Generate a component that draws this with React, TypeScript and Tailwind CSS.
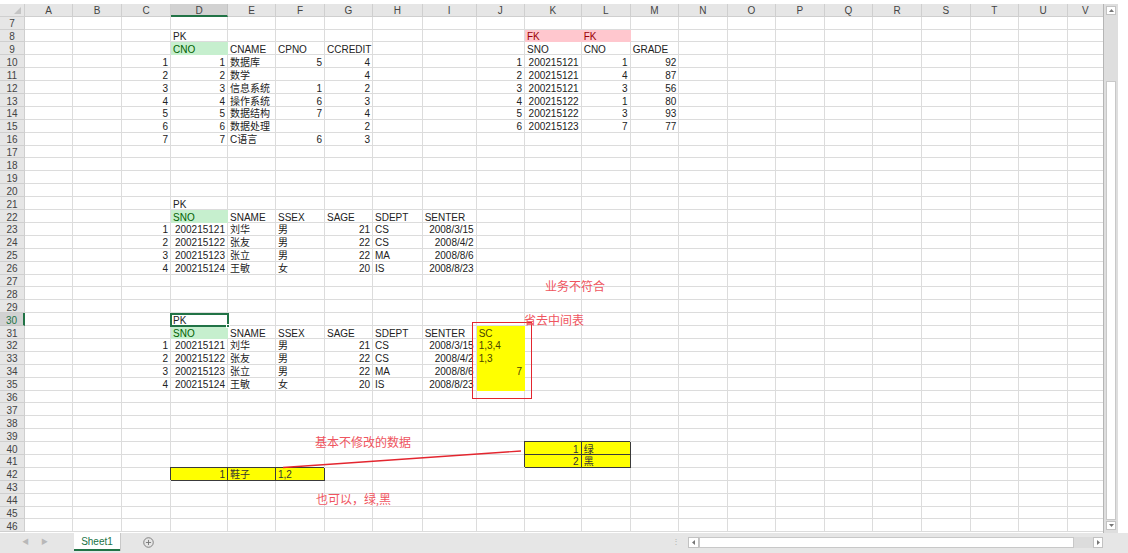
import React from "react";

type Cell = { v: string; r?: boolean; s?: "green" | "pink" | "yellow" | "box" };

const COLS = ["A", "B", "C", "D", "E", "F", "G", "H", "I", "J", "K", "L", "M", "N", "O", "P", "Q", "R", "S", "T", "U", "V"];
const ROWS = Array.from({ length: 40 }, (_, i) => i + 7);

const courses: [string, string, string, string][] = [
  ["1", "数据库", "5", "4"],
  ["2", "数学", "", "4"],
  ["3", "信息系统", "1", "2"],
  ["4", "操作系统", "6", "3"],
  ["5", "数据结构", "7", "4"],
  ["6", "数据处理", "", "2"],
  ["7", "C语言", "6", "3"],
];

const grades: [string, string, string][] = [
  ["200215121", "1", "92"],
  ["200215121", "4", "87"],
  ["200215121", "3", "56"],
  ["200215122", "1", "80"],
  ["200215122", "3", "93"],
  ["200215123", "7", "77"],
];

const students: [string, string, string, string, string, string][] = [
  ["200215121", "刘华", "男", "21", "CS", "2008/3/15"],
  ["200215122", "张友", "男", "22", "CS", "2008/4/2"],
  ["200215123", "张立", "男", "22", "MA", "2008/8/6"],
  ["200215124", "王敏", "女", "20", "IS", "2008/8/23"],
];

function buildCells() {
  const c: Record<string, Cell> = {
    D8: { v: "PK" },
    K8: { v: "FK", s: "pink" },
    L8: { v: "FK", s: "pink" },
    D9: { v: "CNO", s: "green" },
    E9: { v: "CNAME" },
    F9: { v: "CPNO" },
    G9: { v: "CCREDIT" },
    K9: { v: "SNO" },
    L9: { v: "CNO" },
    M9: { v: "GRADE" },
    J31: { v: "SC", s: "yellow" },
    J32: { v: "1,3,4", s: "yellow" },
    J33: { v: "1,3", s: "yellow" },
    J34: { v: "7", r: true, s: "yellow" },
    J35: { v: "", s: "yellow" },
    K40: { v: "1", r: true, s: "box" },
    L40: { v: "绿", s: "box" },
    K41: { v: "2", r: true, s: "box" },
    L41: { v: "黑", s: "box" },
    D42: { v: "1", r: true, s: "box" },
    E42: { v: "鞋子", s: "box" },
    F42: { v: "1,2", s: "box" },
  };
  courses.forEach(([n, name, cp, cr], i) => {
    const r = 10 + i;
    c["C" + r] = { v: n, r: true };
    c["D" + r] = { v: n, r: true };
    c["E" + r] = { v: name };
    c["F" + r] = { v: cp, r: true };
    c["G" + r] = { v: cr, r: true };
  });
  grades.forEach(([sno, cno, g], i) => {
    const r = 10 + i;
    c["J" + r] = { v: String(i + 1), r: true };
    c["K" + r] = { v: sno, r: true };
    c["L" + r] = { v: cno, r: true };
    c["M" + r] = { v: g, r: true };
  });
  [22, 31].forEach((h) => {
    c["D" + (h - 1)] = { v: "PK" };
    c["D" + h] = { v: "SNO", s: "green" };
    c["E" + h] = { v: "SNAME" };
    c["F" + h] = { v: "SSEX" };
    c["G" + h] = { v: "SAGE" };
    c["H" + h] = { v: "SDEPT" };
    c["I" + h] = { v: "SENTER" };
    students.forEach(([sno, name, sex, age, dept, date], i) => {
      const r = h + 1 + i;
      c["C" + r] = { v: String(i + 1), r: true };
      c["D" + r] = { v: sno, r: true };
      c["E" + r] = { v: name };
      c["F" + r] = { v: sex };
      c["G" + r] = { v: age, r: true };
      c["H" + r] = { v: dept };
      c["I" + r] = { v: date, r: true };
    });
  });
  return c;
}

const cells = buildCells();

function styleFor(s?: Cell["s"]) {
  if (s === "green") return "bg-[#c6efce] text-[#006100] border-[#c6efce]";
  if (s === "pink") return "bg-[#ffc7ce] text-[#9c0006] border-[#ffc7ce]";
  if (s === "yellow") return "bg-[#ffff00] text-[#4a4400] border-[#ffff00]";
  if (s === "box") return "bg-[#ffff00] text-[#333] border-[#3a3a3a] shadow-[-1px_-1px_0_0_#3a3a3a]";
  return "text-[#222] border-[#dcdcdc]";
}

function Grid() {
  return (
    <div className="grid grid-cols-[25px_48px_49px_49px_57px_48px_49px_48px_49.7px_54px_48.3px_56.7px_49px_48.6px_48.4px_48.6px_48.4px_48.6px_49px_48.4px_48.6px_48.7px_36px] grid-rows-[12.7px_repeat(40,12.9px)] text-[10px] leading-[10px]">
      {/* header row */}
      <div className="bg-[#e6e6e6] border-r border-b border-[#cfcfcf] flex items-end justify-end pr-[3px] pb-[2px]">
        <svg width="7" height="7" viewBox="0 0 7 7">
          <path d="M7 0V7H0Z" fill="#c4c4c4" />
        </svg>
      </div>
      {COLS.map((col) =>
        col === "D" ? (
          <div key={col} className="bg-[#d2d2d2] border-r border-[#c4c4c4] border-b-2 border-b-[#217346] flex items-start pt-[2px] justify-center text-[#444]">
            {col}
          </div>
        ) : (
          <div key={col} className="bg-[#e6e6e6] border-r border-b border-[#cfcfcf] flex items-start pt-[2px] justify-center text-[#444]">
            {col}
          </div>
        )
      )}
      {ROWS.map((r) => (
        <React.Fragment key={r}>
          {r === 30 ? (
            <div className="bg-[#d2d2d2] border-b border-[#c4c4c4] border-r-2 border-r-[#217346] flex items-start pt-[2.5px] justify-center text-[#217346]">
              {r}
            </div>
          ) : (
            <div className="bg-[#e6e6e6] border-r border-b border-[#cfcfcf] flex items-start pt-[2.5px] justify-center text-[#444]">
              {r}
            </div>
          )}
          {COLS.map((col) => {
            const c = cells[col + r];
            return (
              <div
                key={col}
                className={`border-r border-b flex items-start pt-[2.5px] whitespace-nowrap overflow-visible px-[2px] ${styleFor(c?.s)} ${c?.r ? "justify-end" : "justify-start"}`}
              >
                {c?.v}
              </div>
            );
          })}
        </React.Fragment>
      ))}
    </div>
  );
}

export default function App() {
  return (
    <div className="relative w-[1128px] h-[553px] bg-white overflow-hidden font-['Liberation_Sans','Noto_Sans_CJK_SC',sans-serif]">
      <div className="h-[4px]" />
      <div className="flex h-[529px]">
        <div className="w-[1104px] h-[529px] overflow-hidden border-r border-[#b5b5b5]">
          <Grid />
        </div>
        {/* vertical scrollbar */}
        <div className="w-[14px] bg-[#dedede] flex flex-col items-center pt-[2px] pb-[3px] gap-[1px]">
          <div className="w-[10px] h-[9px] bg-white border border-[#c2c2c2] flex items-center justify-center">
            <svg width="5" height="3" viewBox="0 0 5 3">
              <path d="M2.5 0L5 3H0Z" fill="#777" />
            </svg>
          </div>
          <div className="h-[64px]" />
          <div className="w-[10px] flex-1 bg-white border border-[#c8c8c8]" />
          <div className="w-[10px] h-[9px] bg-white border border-[#c2c2c2] flex items-center justify-center">
            <svg width="5" height="3" viewBox="0 0 5 3">
              <path d="M0 0H5L2.5 3Z" fill="#777" />
            </svg>
          </div>
        </div>
        <div className="w-[10px]" />
      </div>

      {/* sheet tabs bar */}
      <div className="h-[20px] bg-[#e6e6e6] flex items-start text-[10px]">
        <div className="w-[74px] h-[18px] flex items-center gap-[12px] pl-[22px] text-[#b8b8b8]">
          <span className="text-[7px]">◀</span>
          <span className="text-[7px]">▶</span>
        </div>
        <div className="w-[46px] h-[18px] bg-white border-b-2 border-[#217346] flex items-center justify-center text-[#217346] shadow-[1px_0_0_#c8c8c8]">
          Sheet1
        </div>
        <div className="w-[56px] h-[18px] flex items-center justify-center">
          <svg width="11" height="11" viewBox="0 0 12 12">
            <circle cx="6" cy="6" r="5.2" fill="none" stroke="#777" strokeWidth="1" />
            <path d="M6 3.2v5.6M3.2 6h5.6" stroke="#777" strokeWidth="1" />
          </svg>
        </div>
        <div className="flex-1 flex items-center h-[18px] pl-[496px]">
          <span className="text-[#b0b0b0] text-[8px] leading-[8px]">⋮</span>
          <div className="ml-[8px] w-[415px] h-[11px] bg-[#dcdcdc] flex">
            <div className="w-[11px] h-[11px] bg-white border border-[#c2c2c2] flex items-center justify-center">
              <svg width="3" height="5" viewBox="0 0 3 5">
                <path d="M3 0V5L0 2.5Z" fill="#777" />
              </svg>
            </div>
            <div className="w-[375px] h-[11px] bg-white border border-[#c8c8c8]" />
            <div className="flex-1" />
            <div className="w-[10px] h-[11px] bg-white border border-[#c2c2c2] flex items-center justify-center">
              <svg width="3" height="5" viewBox="0 0 3 5">
                <path d="M0 0V5L3 2.5Z" fill="#777" />
              </svg>
            </div>
          </div>
        </div>
      </div>

      {/* active cell D30 */}
      <div className="absolute left-[170px] top-[312.5px] w-[59px] h-[14.5px] border-2 border-[#217346]" />
      <div className="absolute left-[226px] top-[324px] w-[4px] h-[4px] bg-[#217346] border border-white" />

      {/* drawing layer: annotations */}
      <div className="absolute left-[472px] top-[322px] w-[60px] h-[77px] border-[1.5px] border-[#e3262f]" />
      <svg className="absolute left-0 top-0 pointer-events-none" width="1128" height="553">
        <line x1="283" y1="467.5" x2="521" y2="451" stroke="#e3262f" strokeWidth="1.3" />
      </svg>
      <div className="absolute left-[545px] top-[280px] text-[12px] leading-[14px] text-[#ef5560] font-['Liberation_Serif','Noto_Sans_CJK_SC',serif]">
        业务不符合
      </div>
      <div className="absolute left-[524px] top-[314px] text-[12px] leading-[14px] text-[#ef5560] font-['Liberation_Serif','Noto_Sans_CJK_SC',serif]">
        省去中间表
      </div>
      <div className="absolute left-[315px] top-[436px] text-[12px] leading-[14px] text-[#ef5560] font-['Liberation_Serif','Noto_Sans_CJK_SC',serif]">
        基本不修改的数据
      </div>
      <div className="absolute left-[316px] top-[493px] text-[12px] leading-[14px] text-[#ef5560] font-['Liberation_Serif','Noto_Sans_CJK_SC',serif]">
        也可以，绿,黑
      </div>
    </div>
  );
}
